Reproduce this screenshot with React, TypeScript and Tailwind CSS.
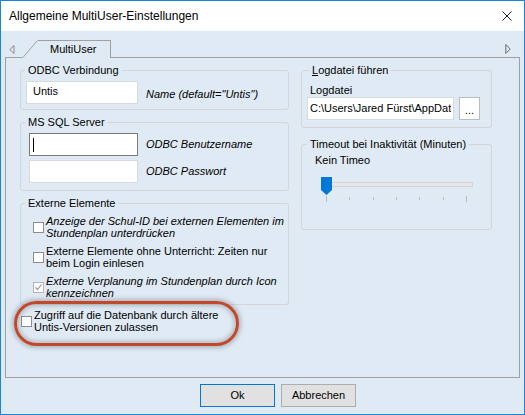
import type { ReactNode } from 'react';

function Group({
  title,
  legendClass = '',
  className = '',
  children,
}: {
  title: ReactNode;
  legendClass?: string;
  className?: string;
  children: ReactNode;
}) {
  return (
    <fieldset className={`border border-[#d2d5d9] rounded-[3px] ${className}`}>
      <legend className={`px-[3px] text-[11px] leading-[14px] ${legendClass}`}>{title}</legend>
      {children}
    </fieldset>
  );
}

function Box({ checked = false, dim = false }: { checked?: boolean; dim?: boolean }) {
  return (
    <div
      className={`w-[11px] h-[11px] shrink-0 bg-white border flex items-center justify-center ${
        dim ? 'border-[#b5b5b5]' : 'border-[#8c8c8c]'
      }`}
    >
      {checked && (
        <svg width="9" height="9" viewBox="0 0 9 9">
          <polyline points="1.5,4.5 3.5,6.5 7.5,1.5" fill="none" stroke="#9a9a9a" strokeWidth="1.2" />
        </svg>
      )}
    </div>
  );
}

function Field({ children, width, focused = false }: { children?: ReactNode; width: string; focused?: boolean }) {
  return (
    <div
      className={`h-[23px] ${width} bg-white border flex items-center overflow-hidden whitespace-nowrap ${
        focused ? 'border-[#7a7a7a]' : 'border-[#d6d9dd]'
      }`}
    >
      {children}
    </div>
  );
}

export default function App() {
  return (
    <div className="w-[525px] h-[415px] border border-[#1a86d9] flex flex-col text-black text-[11px] leading-[13px] font-['Liberation_Sans',Arial,sans-serif]">
      {/* Title bar */}
      <div className="h-[30px] bg-white flex items-center justify-between pl-[8px] pr-[12px]">
        <span className="text-[12px]">Allgemeine MultiUser-Einstellungen</span>
        <svg width="10" height="10" viewBox="0 0 10 10">
          <path d="M0.5 0.5 L9.5 9.5 M9.5 0.5 L0.5 9.5" stroke="#222" strokeWidth="1" />
        </svg>
      </div>

      <div className="flex-1 bg-[#dfeaf4] px-[4px] flex flex-col">
        {/* Tab strip */}
        <div className="h-[27px] flex items-end">
          <div className="w-[17px] h-full border-b border-[#a0a0a0] pl-[4px] pt-[14px]">
            <svg width="6" height="9" viewBox="0 0 6 9">
              <path d="M5 0.5 L0.8 4.5 L5 8.5 Z" fill="none" stroke="#8a8a8a" strokeWidth="1" />
            </svg>
          </div>
          <svg width="16" height="18" viewBox="0 0 16 18" className="shrink-0">
            <path d="M0.5 18 L15.5 0.5" stroke="#a0a0a0" strokeWidth="1" fill="none" />
          </svg>
          <div className="w-[73px] h-[18px] border-t border-r border-[#a0a0a0] pl-[12px] pt-[2px]">MultiUser</div>
          <div className="flex-1 h-full border-b border-[#a0a0a0] flex justify-end pr-[9px] pt-[13px]">
            <svg width="6" height="10" viewBox="0 0 6 10">
              <path d="M0.8 0.5 L5.2 5 L0.8 9.5 Z" fill="none" stroke="#6a6a6a" strokeWidth="1" />
            </svg>
          </div>
        </div>

        {/* Page */}
        <div className="h-[320px] border-l border-r border-b border-[#a0a0a0] pt-[5px] pl-[14px] flex gap-[12px]">
          {/* Left column */}
          <div className="w-[269px] flex flex-col">
            <Group title="ODBC Verbindung" legendClass="ml-[4px]">
              <div className="pt-[4px] pb-[5px] pl-[5px] flex items-center gap-[8px]">
                <Field width="w-[112px]">
                  <span className="pl-[6px] -mt-[2px]">Untis</span>
                </Field>
                <span className="italic mt-[3px]">Name (default="Untis")</span>
              </div>
            </Group>

            <Group title="MS SQL Server" legendClass="ml-[4px]" className="mt-[5px]">
              <div className="pt-[4px] pb-[7px] pl-[8px] flex flex-col gap-[4px]">
                <div className="flex items-center gap-[8px]">
                  <Field width="w-[109px]" focused>
                    <span className="ml-[3px] w-px h-[14px] bg-black" />
                  </Field>
                  <span className="italic">ODBC Benutzername</span>
                </div>
                <div className="flex items-center gap-[8px]">
                  <Field width="w-[109px]" />
                  <span className="italic">ODBC Passwort</span>
                </div>
              </div>
            </Group>

            <Group title="Externe Elemente" legendClass="ml-[4px]" className="mt-[5px]">
              <div className="pt-[5px] pb-[5px] pl-[12px] flex flex-col gap-[6px] leading-[12px]">
                <div className="flex items-center gap-[2px]">
                  <Box />
                  <span className="italic">
                    Anzeige der Schul-ID bei externen Elementen im
                    <br />
                    Stundenplan unterdrücken
                  </span>
                </div>
                <div className="flex items-center gap-[2px]">
                  <Box />
                  <span>
                    Externe Elemente ohne Unterricht: Zeiten nur
                    <br />
                    beim Login einlesen
                  </span>
                </div>
                <div className="flex items-center gap-[2px]">
                  <Box checked dim />
                  <span className="italic">
                    Externe Verplanung im Stundenplan durch Icon
                    <br />
                    kennzeichnen
                  </span>
                </div>
              </div>
            </Group>

            <div className="relative mt-[4px] ml-[1px] flex items-center gap-[2px] leading-[12px]">
              <Box />
              <span>
                Zugriff auf die Datenbank durch ältere
                <br />
                Untis-Versionen zulassen
              </span>
              {/* annotation ring */}
              <div className="absolute -left-[7px] -top-[8px] w-[225px] h-[45px] rounded-full border-[3px] border-[#c4472c] shadow-[0_0_4px_2px_rgba(110,120,125,0.45),inset_0_0_4px_2px_rgba(110,120,125,0.4)] pointer-events-none" />
            </div>
          </div>

          {/* Right column */}
          <div className="w-[191px] flex flex-col">
            <Group
              title={
                <>
                  <span className="underline underline-offset-1">L</span>ogdatei führen
                </>
              }
              legendClass="ml-[7px]"
            >
              <div className="pt-[7px] pb-[7px] pl-[5px] flex flex-col">
                <span className="ml-[3px]">Logdatei</span>
                <div className="flex gap-[5px]">
                  <Field width="w-[147px]">
                    <span className="block w-[143px] pl-[2px] overflow-hidden">
                      {'C:\\Users\\Jared Fürst\\AppDat'}
                    </span>
                  </Field>
                  <div className="w-[21px] h-[23px] bg-white border border-[#b9bcc0] flex items-end justify-center pb-[5px] leading-[8px]">
                    ...
                  </div>
                </div>
              </div>
            </Group>

            <Group title="Timeout bei Inaktivität (Minuten)" legendClass="ml-[5px]" className="mt-[9px]">
              <div className="pt-[3px] pb-[27px] flex flex-col">
                <span className="pl-[13px]">Kein Timeo</span>
                <div className="pl-[16px] mt-[9px]">
                  <svg width="160" height="26" viewBox="0 0 160 26">
                    <rect x="4.5" y="6.5" width="150" height="4" fill="#e7e7e7" stroke="#d4d4d4" />
                    {[8, 31, 55, 78, 101, 125, 148].map((x, i) => (
                      <line
                        key={x}
                        x1={x + 0.5}
                        x2={x + 0.5}
                        y1={i === 0 || i === 6 ? 20 : 21}
                        y2={i === 0 || i === 6 ? 26 : 24}
                        stroke="#bcbcbc"
                      />
                    ))}
                    <polygon points="3,1 14,1 14,14 8.5,19 3,14" fill="#0078d7" />
                  </svg>
                </div>
              </div>
            </Group>
          </div>
        </div>

        {/* Buttons */}
        <div className="pt-[6px] pl-[195px] flex gap-[6px]">
          <button className="w-[75px] h-[23px] bg-[#e1e1e1] border border-[#0078d7] text-[11px]">Ok</button>
          <button className="w-[75px] h-[23px] bg-[#e1e1e1] border border-[#adadad] text-[11px]">Abbrechen</button>
        </div>
      </div>
    </div>
  );
}
